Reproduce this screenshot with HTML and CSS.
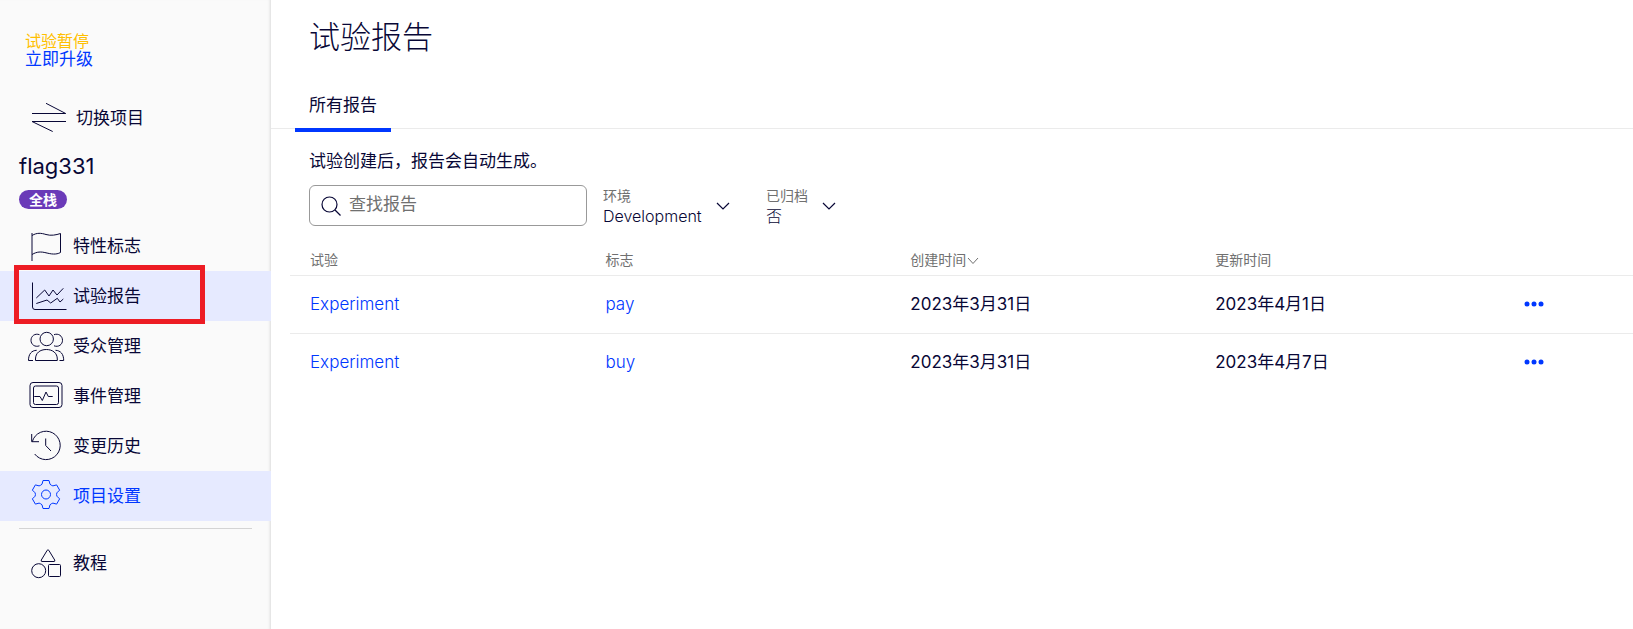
FILE: index.html
```html
<!DOCTYPE html>
<html lang="zh-CN">
<head>
<meta charset="utf-8">
<title>试验报告</title>
<link rel="stylesheet" href="styles.css">
</head>
<body>
<div class="app">
  <aside class="sidebar">
    <div class="trial">
      <span class="trial-status">试验暂停</span>
      <a class="trial-link" href="#">立即升级</a>
    </div>
    <a class="nav-item switch" href="#">
      <svg class="icon" viewBox="0 0 40 40"><path d="M20 5.3 39.7 15.5H6M26.7 33.5 6 23.5H40"/></svg>
      切换项目
    </a>
    <div class="project">
      <h2 class="project-name">flag331</h2>
      <span class="badge">全栈</span>
    </div>
    <nav class="nav">
      <a class="nav-item" href="#">
        <svg class="icon" viewBox="0 0 40 40"><path d="M6 7v28M6 9.5C11 6.500 15 7 20 8.500S30 9 34.500 7.500V26.500C30 29 25 28 20 26.800S11 25.500 6 28.500"/></svg>
        特性标志
      </a>
      <a class="nav-item active" href="#">
        <svg class="icon" viewBox="0 0 40 40"><path d="M6.500 6.500V31Q6.500 33.500 9 33.500H40.500M10.300 22 18.700 14 23 20 27 14 31 19 37.300 12.300M10.300 27.500 21 24 24.700 27 31.300 22.300 34 26 37.300 23"/></svg>
        试验报告
        <span class="highlight"></span>
      </a>
      <a class="nav-item" href="#">
        <svg class="icon" viewBox="0 0 40 40"><circle cx="20.700" cy="13" r="6.700"/><path d="M13.500 8.700C9 7 5 10 5 14.300S9 21.500 13.500 19.800M28 8.700C32.500 7 36.500 10 36.500 14.300S32.500 21.500 28 19.800M9.500 34.500V33C9.500 27 14 23.500 20.300 23.500S31.300 27 31.300 33V34.500ZM7 34.500H2.500C2.500 28 5.500 24.500 10.700 24.300M33.500 34.500H37.700C37.700 28 34.500 24.500 29.500 24.300"/></svg>
        受众管理
      </a>
      <a class="nav-item" href="#">
        <svg class="icon" viewBox="0 0 40 40"><rect x="4" y="6.500" width="32" height="25" rx="3"/><rect x="7.500" y="10" width="25" height="18.500" rx="2"/><path d="M8.300 20.500H14L16.300 24.500 20 16 22.300 20.500H26.700"/></svg>
        事件管理
      </a>
      <a class="nav-item" href="#">
        <svg class="icon" viewBox="0 0 40 40"><path d="M8.700 28A14.200 14.200 0 1 0 6.300 15.700M5.700 8V15.700H13M19.700 12.500V19.500L25 25"/></svg>
        变更历史
      </a>
      <a class="nav-item active current" href="#">
        <svg class="icon" viewBox="0 0 40 40"><g transform="translate(20 18.500)"><circle r="4.500"/><path d="M-4-10.300-3-14H3L4-10.300Q5.300-9 6.920-8.610L10.620-9.600 13.620-4.400 10.920-1.690Q10.200 0 10.920 1.690L13.620 4.400 10.620 9.600 6.920 8.610Q5.300 9 4 10.300L3 14H-3L-4 10.300Q-5.300 9-6.920 8.610L-10.620 9.600-13.620 4.400-10.920 1.690Q-10.200 0-10.920-1.690L-13.620-4.400-10.620-9.600-6.920-8.610Q-5.300-9-4-10.300Z"/></g></svg>
        项目设置
      </a>
    </nav>
    <hr class="divider">
    <a class="nav-item" href="#">
      <svg class="icon" viewBox="0 0 40 40"><path d="M21.200 7.300Q22 6 22.800 7.300L28.700 17Q29.300 18.500 28 18.500H16Q14.700 18.500 15.300 17Z"/><circle cx="12.700" cy="27.700" r="7"/><rect x="22.500" y="21.500" width="12" height="12" rx="1"/></svg>
      教程
    </a>
  </aside>
  <main class="main">
    <header class="header">
      <h1 class="title">试验报告</h1>
      <div class="tabs"><a class="tab" href="#">所有报告</a></div>
    </header>
    <section class="content">
      <p class="intro">试验创建后，报告会自动生成。</p>
      <form class="filters">
        <label class="search">
          <svg class="search-icon" viewBox="0 0 20 20"><circle cx="8.500" cy="8.500" r="7.500"/><path d="M14 14 19.500 19.500"/></svg>
          <input class="search-input" type="text" placeholder="查找报告" aria-label="查找报告">
        </label>
        <div class="filter">
          <div class="filter-field">
            <label class="filter-label" for="env">环境</label>
            <select class="filter-select" id="env"><option>Development</option></select>
          </div>
          <svg class="chevron" viewBox="0 0 14 8"><path d="M1 1 7 7 13 1"/></svg>
        </div>
        <div class="filter">
          <div class="filter-field">
            <label class="filter-label" for="archived">已归档</label>
            <select class="filter-select" id="archived"><option>否</option></select>
          </div>
          <svg class="chevron" viewBox="0 0 14 8"><path d="M1 1 7 7 13 1"/></svg>
        </div>
      </form>
    </section>
    <table class="reports">
      <colgroup><col class="col-name"><col class="col-flag"><col class="col-date"><col class="col-updated"><col></colgroup>
      <thead>
        <tr>
          <th>试验</th>
          <th>标志</th>
          <th>创建时间<svg class="sort" viewBox="0 0 12 8"><path d="M1 1 6 6.500 11 1"/></svg></th>
          <th>更新时间</th>
          <th></th>
        </tr>
      </thead>
      <tbody>
        <tr>
          <td><a class="report-link" href="#">Experiment</a></td>
          <td><a class="report-link" href="#">pay</a></td>
          <td>2023年3月31日</td>
          <td>2023年4月1日</td>
          <td><button class="more" type="button" aria-label="更多"><svg viewBox="0 0 20 6"><circle cx="3" cy="3" r="2.500"/><circle cx="10" cy="3" r="2.500"/><circle cx="17" cy="3" r="2.500"/></svg></button></td>
        </tr>
        <tr>
          <td><a class="report-link" href="#">Experiment</a></td>
          <td><a class="report-link" href="#">buy</a></td>
          <td>2023年3月31日</td>
          <td>2023年4月7日</td>
          <td><button class="more" type="button" aria-label="更多"><svg viewBox="0 0 20 6"><circle cx="3" cy="3" r="2.500"/><circle cx="10" cy="3" r="2.500"/><circle cx="17" cy="3" r="2.500"/></svg></button></td>
        </tr>
      </tbody>
    </table>
  </main>
</div>
</body>
</html>
```
FILE: styles.css
```css
* { box-sizing: border-box; }

body {
  margin: 0;
  background: #fff;
  color: #080736;
  font: 400 17px/24px Inter, "Noto Sans CJK SC", sans-serif;
}

a { color: #0037ff; text-decoration: none; }

.app { display: flex; min-height: 100vh; }

.sidebar {
  flex: none;
  width: 271px;
  padding-top: 32px;
  background: #fafafa;
  box-shadow: inset -3px 0 3px -2px rgba(0, 0, 0, 0.12);
}

.trial {
  display: flex;
  flex-direction: column;
  padding-left: 25px;
  line-height: 18px;
}
.trial-status { color: #ffbf00; font-size: 16px; }

.nav-item {
  position: relative;
  display: flex;
  align-items: center;
  gap: 7px;
  height: 50px;
  padding-left: 26px;
  color: #080736;
}
.nav-item.active { background: #e6eaff; }
.nav-item.current { color: #0037ff; }
.switch { gap: 10px; margin-top: 25px; }

.icon {
  flex: none;
  width: 40px;
  height: 40px;
  overflow: visible;
  fill: none;
  stroke: currentColor;
  stroke-width: 1;
  stroke-linejoin: round;
}

.highlight {
  position: absolute;
  top: -6px;
  left: 14px;
  width: 191px;
  height: 59px;
  border: 5px solid #ed1c24;
}

.project { padding: 9px 19px 0; }
.project-name {
  margin: 0 0 10px;
  font-size: 22px;
  font-weight: 400;
  line-height: 28px;
}
.badge {
  display: block;
  width: 48px;
  border-radius: 10px;
  background: #6a3ab8;
  color: #fff;
  font-size: 14px;
  font-weight: 700;
  line-height: 19px;
  text-align: center;
}
.nav { padding-top: 12px; }

.divider {
  margin: 7px 19px 9px;
  border: 0;
  border-top: 1px solid #d4d4d4;
}

.main { flex: 1; min-width: 0; }

.header { border-bottom: 1px solid #ebebeb; }
.title {
  margin: 0;
  padding: 15px 38px 23px;
  font-size: 31px;
  font-weight: 300;
  line-height: 44px;
}
.tabs { display: flex; padding-left: 24px; }
.tab {
  margin-bottom: -4px;
  padding: 11px 14px;
  border-bottom: 4px solid #0037ff;
  color: #080736;
}

.content { padding: 20px 38px 0; }
.intro { margin: 0 0 12px; }

.filters { display: flex; align-items: center; gap: 16px; }
.search {
  display: flex;
  align-items: center;
  gap: 8px;
  width: 278px;
  height: 41px;
  padding: 0 11px;
  border: 1px solid #999;
  border-radius: 6px;
}
.search-icon {
  flex: none;
  width: 20px;
  height: 20px;
  fill: none;
  stroke: #080736;
  stroke-width: 1.200;
}
.search-input {
  flex: 1;
  min-width: 0;
  padding: 0 0 3px;
  border: 0;
  outline: 0;
  background: none;
  color: inherit;
  font: inherit;
}
.search-input::placeholder { color: #707070; }

.filter { display: flex; align-items: center; gap: 14px; margin-right: 20px; }
.filter-field { display: flex; flex-direction: column; align-items: flex-start; }
.filter-label { color: #707070; font-size: 14px; line-height: 20px; }
.filter-select {
  appearance: none;
  margin: 0;
  padding: 0;
  border: 0;
  background: none;
  color: inherit;
  font: inherit;
  font-size: 16px;
  font-weight: 300;
  line-height: 20px;
}
.chevron {
  width: 14px;
  height: 8px;
  fill: none;
  stroke: #080736;
  stroke-width: 1.200;
}

.reports {
  width: calc(100% - 19px);
  margin: 19px 0 0 19px;
  border-collapse: collapse;
  table-layout: fixed;
}
.col-name { width: 22%; }
.col-flag, .col-date { width: 22.700%; }
.col-updated { width: 23%; }
.reports th, .reports td { padding: 0 0 0 20px; text-align: left; }
.reports th {
  height: 30px;
  color: #707070;
  font-size: 14px;
  font-weight: 400;
}
.reports td { height: 58px; }
.reports tbody tr { border-top: 1px solid #ebebeb; }
.report-link { font-weight: 300; }
.sort {
  width: 12px;
  height: 8px;
  margin-left: 1px;
  fill: none;
  stroke: #707070;
}
.more { display: block; padding: 0; border: 0; background: none; }
.more svg { display: block; width: 20px; height: 6px; fill: #0037ff; }
```
